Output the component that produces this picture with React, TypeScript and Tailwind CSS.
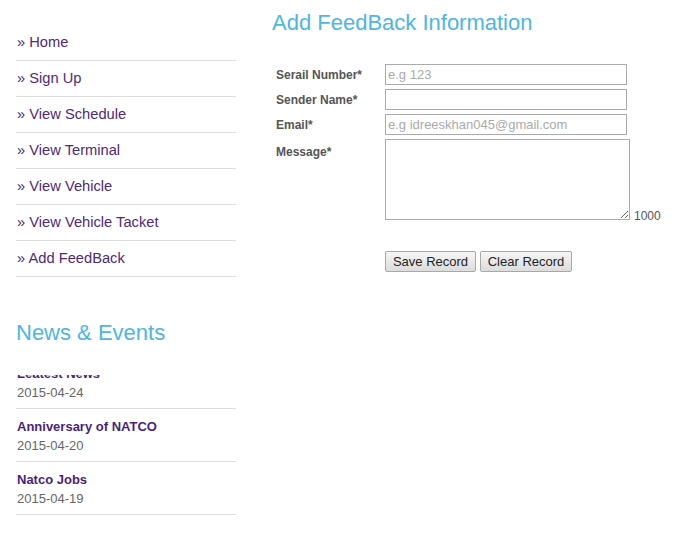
import React from "react";

const navItems = [
  "Home",
  "Sign Up",
  "View Schedule",
  "View Terminal",
  "View Vehicle",
  "View Vehicle Tacket",
  "Add FeedBack",
];

const news = [
  { title: "Leatest News", date: "2015-04-24" },
  { title: "Anniversary of NATCO", date: "2015-04-20" },
  { title: "Natco Jobs", date: "2015-04-19" },
];

function Field({ label, placeholder }: { label: string; placeholder?: string }) {
  return (
    <div className="flex items-center h-[25px]">
      <label className="w-[113px] pl-[4px] text-[12px] font-bold text-[#555] leading-none">{label}</label>
      <input
        className="w-[242px] h-[21px] border border-[#aaa] px-[2px] text-[13px] text-[#333] placeholder:text-[#aaa] outline-none bg-white"
        placeholder={placeholder}
      />
    </div>
  );
}

export default function App() {
  return (
    <div className="w-[680px] h-[536px] bg-white flex" style={{ fontFamily: '"Liberation Sans", Arial, sans-serif' }}>
      <div className="w-[220px] ml-[16px] flex flex-col">
        <ul className="mt-[25px]">
          {navItems.map((n) => (
            <li key={n} className="h-[36px] border-b border-[#ddd] flex items-center pl-[1px] text-[14.7px] text-[#4f2a78]">
              » {n}
            </li>
          ))}
        </ul>
        <h2 className="mt-[42px] text-[22px] leading-[28px] text-[#4db6e2]">News &amp; Events</h2>
        <div className="mt-[28px] h-[150px] overflow-hidden">
          <div className="mt-[-19px]">
            {news.map((n) => (
              <div key={n.title} className="h-[53px] border-b border-[#ddd] pt-[8px] pl-[1px]">
                <div className="text-[13px] leading-[19px] font-bold text-[#4a1f7a]">{n.title}</div>
                <div className="text-[13px] leading-[19px] text-[#666]">{n.date}</div>
              </div>
            ))}
          </div>
        </div>
      </div>
      <div className="ml-[36px] flex flex-col">
        <h1 className="mt-[9px] text-[22px] leading-[28px] text-[#4db6e2]">Add FeedBack Information</h1>
        <div className="mt-[25px] flex flex-col">
          <Field label="Serail Number*" placeholder="e.g 123" />
          <Field label="Sender Name*" />
          <Field label="Email*" placeholder="e.g idreeskhan045@gmail.com" />
          <div className="flex mt-[2px]">
            <label className="w-[113px] pl-[4px] pt-[7px] text-[12px] font-bold text-[#555] leading-none">Message*</label>
            <textarea className="w-[245px] h-[81px] border border-[#aaa] resize outline-none bg-white" />
            <span className="self-end ml-[4px] text-[12px] leading-none text-[#555] mb-[-2px]">1000</span>
          </div>
          <div className="flex gap-[4px] ml-[113px] mt-[31px]">
            <button className="w-[91px] h-[21px] border border-[#a9a9a9] rounded-[2px] bg-gradient-to-b from-[#f6f6f6] to-[#dcdcdc] text-[13px] text-[#222] leading-none">
              Save Record
            </button>
            <button className="w-[92px] h-[21px] border border-[#a9a9a9] rounded-[2px] bg-gradient-to-b from-[#f6f6f6] to-[#dcdcdc] text-[13px] text-[#222] leading-none">
              Clear Record
            </button>
          </div>
        </div>
      </div>
    </div>
  );
}
